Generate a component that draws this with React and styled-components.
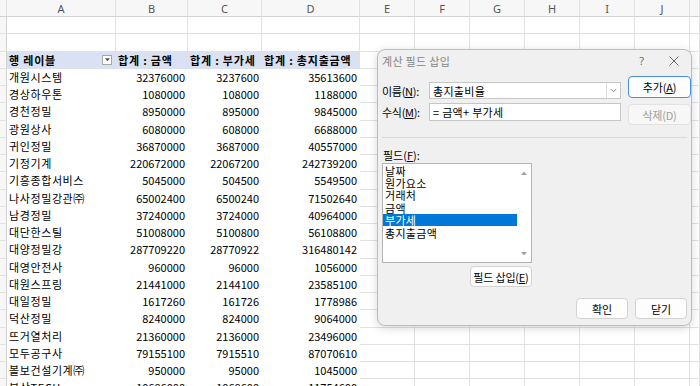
import React from 'react';
import styled, { createGlobalStyle } from 'styled-components';

const GlobalStyle = createGlobalStyle`
  html, body { margin: 0; padding: 0; background: #fff; }
  body {
    width: 700px; height: 386px; overflow: hidden;
    font-family: "Noto Sans CJK KR", "Noto Sans", sans-serif;
  }
`;

const COLS = '7px 109px 72px 74px 98px 55px 55px 55px 55px 55px 55px 1fr';
const LETTERS = ['A', 'B', 'C', 'D', 'E', 'F', 'G', 'H', 'I', 'J', ''];
const EXTRA = 7; // columns E..K

const DATA = [
  ['개원시스템', '32376000', '3237600', '35613600'],
  ['경상하우톤', '1080000', '108000', '1188000'],
  ['경천정밀', '8950000', '895000', '9845000'],
  ['광원상사', '6080000', '608000', '6688000'],
  ['귀인정밀', '36870000', '3687000', '40557000'],
  ['기정기계', '220672000', '22067200', '242739200'],
  ['기흥종합서비스', '5045000', '504500', '5549500'],
  ['나사정밀강관㈜', '65002400', '6500240', '71502640'],
  ['남경정밀', '37240000', '3724000', '40964000'],
  ['대단한스틸', '51008000', '5100800', '56108800'],
  ['대양정밀강', '287709220', '28770922', '316480142'],
  ['대영안전사', '960000', '96000', '1056000'],
  ['대원스프링', '21441000', '2144100', '23585100'],
  ['대일정밀', '1617260', '161726', '1778986'],
  ['덕산정밀', '8240000', '824000', '9064000'],
  ['뜨거열처리', '21360000', '2136000', '23496000'],
  ['모두공구사', '79155100', '7915510', '87070610'],
  ['볼보건설기계㈜', '950000', '95000', '1045000'],
  ['부산TECH', '10686000', '1068600', '11754600'],
];

const FIELDS = ['날짜', '원가요소', '거래처', '금액', '부가세', '총지출금액'];

const Page = styled.div`
  position: relative;
  width: 700px;
  height: 386px;
  overflow: hidden;
`;

const Sheet = styled.div`
  display: grid;
  grid-template-columns: ${COLS};
  grid-template-rows: 17px;
  grid-auto-rows: 17.25px;
  font-family: "Noto Sans CJK KR", sans-serif;
  font-size: 11px;
  color: #000;
`;

const ColHead = styled.div`
  box-sizing: border-box;
  background: #f7f7f7;
  border-right: 1px solid #e2e2e2;
  border-bottom: 1px solid #d2d2d2;
  display: flex;
  align-items: center;
  justify-content: center;
  color: #555;
  font-family: "Noto Sans", sans-serif;
  font-size: 11px;
`;

const RowHead = styled.div`
  box-sizing: border-box;
  background: #f7f7f7;
  border-right: 1px solid #d2d2d2;
  border-bottom: 1px solid #e2e2e2;
`;

const Cell = styled.div`
  box-sizing: border-box;
  display: flex;
  align-items: center;
  min-width: 0;
  white-space: nowrap;
  overflow: hidden;
  justify-content: ${p => (p.$num ? 'flex-end' : 'space-between')};
  padding: ${p => (p.$num ? '0 2px 0 0' : '0 0 0 2px')};
  border-right: 1px solid ${p => (p.$pivot ? 'transparent' : '#e2e2e2')};
  border-bottom: 1px solid ${p => (p.$pivot ? 'transparent' : '#e2e2e2')};
  background: ${p => (p.$head ? '#d9e1f2' : '#fff')};
  font-weight: ${p => (p.$head ? 700 : 400)};
  letter-spacing: ${p => (p.$head ? '0.8px' : p.$label ? '0.6px' : '0')};
`;

const FilterButton = styled.span`
  box-sizing: border-box;
  width: 10px;
  height: 10px;
  margin-right: 3px;
  background: #fff;
  border: 1px solid #a6a6a6;
  display: flex;
  align-items: center;
  justify-content: center;
`;

/* ---------- dialog ---------- */

const Dialog = styled.div`
  position: absolute;
  left: 377px;
  top: 49px;
  width: 315px;
  height: 277px;
  box-sizing: border-box;
  background: #f0f0f0;
  border: 1px solid #bdbdbd;
  border-radius: 8px;
  box-shadow: 0 2px 10px rgba(0, 0, 0, 0.16);
  display: flex;
  flex-direction: column;
  font-family: "Noto Sans CJK KR", sans-serif;
  font-size: 11px;
  color: #000;
`;

const TitleBar = styled.div`
  height: 21px;
  display: flex;
  align-items: center;
  padding: 0 12px 0 4px;
  color: #858585;
`;

const Title = styled.span`
  flex: 1;
  letter-spacing: 0.3px;
`;

const TitleIcons = styled.div`
  display: flex;
  align-items: center;
  gap: 25px;
  color: #6b6b6b;
  font-family: "Noto Sans", sans-serif;
  font-size: 11px;
`;

const Body = styled.div`
  padding: 5px 4px 0 4px;
  display: flex;
  flex-direction: column;
`;

const TopGrid = styled.div`
  display: grid;
  grid-template-columns: 40px 192px 63px;
  grid-template-rows: 23px 22px;
  column-gap: 7px;
  row-gap: 4px;
`;

const Label = styled.div`
  align-self: ${p => (p.$row === 1 ? 'end' : 'start')};
  height: ${p => (p.$row === 1 ? '17px' : '18px')};
  display: flex;
  align-items: center;
  white-space: nowrap;
  letter-spacing: -0.3px;
`;

const Field = styled.div`
  box-sizing: border-box;
  align-self: ${p => (p.$row === 1 ? 'end' : 'start')};
  height: ${p => (p.$row === 1 ? '17px' : '18px')};
  background: #fff;
  border: 1px solid #c6c6c6;
  display: flex;
  align-items: center;
`;

const FieldText = styled.span`
  flex: 1;
  padding-left: 3px;
  letter-spacing: 0.3px;
`;

const DropButton = styled.span`
  box-sizing: border-box;
  width: 14px;
  height: 100%;
  border-left: 1px solid #dcdcdc;
  display: flex;
  align-items: center;
  justify-content: center;
`;

const Button = styled.button`
  box-sizing: border-box;
  height: ${p => p.$h || 21}px;
  width: ${p => (p.$w ? `${p.$w}px` : 'auto')};
  margin-top: ${p => p.$mt || 0}px;
  align-self: start;
  padding: 0;
  background: ${p => (p.$disabled ? '#f7f7f7' : '#fdfdfd')};
  border: 1px solid ${p => (p.$default ? '#4a8fd8' : p.$disabled ? '#e2e2e2' : '#d3d3d3')};
  border-radius: 4px;
  color: ${p => (p.$disabled ? '#9d9d9d' : '#000')};
  font-family: "Noto Sans CJK KR", sans-serif;
  font-size: 11px;
  display: flex;
  align-items: center;
  justify-content: center;
  letter-spacing: -0.2px;
`;

const Separator = styled.div`
  margin-top: 12px;
  height: 1px;
  background: #dadada;
`;

const FieldLabel = styled.div`
  margin-top: 10px;
  height: 14px;
  display: flex;
  align-items: center;
  padding-left: 1px;
`;

const ListArea = styled.div`
  width: 150px;
  display: flex;
  flex-direction: column;
  margin-top: 1px;
`;

const ListBox = styled.div`
  box-sizing: border-box;
  width: 150px;
  height: 100px;
  background: #fff;
  border: 1px solid #b4b4b4;
  display: flex;
`;

const Items = styled.div`
  width: 134px;
  display: flex;
  flex-direction: column;
  padding-top: 0.5px;
`;

const Item = styled.div`
  height: 12.4px;
  line-height: 12px;
  display: flex;
  align-items: center;
  overflow: hidden;
  padding-left: 2px;
  letter-spacing: 0.3px;
  background: ${p => (p.$selected ? '#0078d7' : 'transparent')};
  color: ${p => (p.$selected ? '#fff' : '#000')};
`;

const ScrollBar = styled.div`
  flex: 1;
  display: flex;
  flex-direction: column;
  align-items: center;
  justify-content: space-between;
  padding: 7px 0 6px;
`;

const InsertRow = styled.div`
  display: flex;
  justify-content: flex-end;
  margin-top: 3px;
`;

const Footer = styled.div`
  display: flex;
  justify-content: flex-end;
  gap: 7px;
  margin-top: 11px;
`;

const Chevron = () => (
  <svg width="7" height="5" viewBox="0 0 7 5">
    <path d="M0.8 1 L3.5 3.8 L6.2 1" fill="none" stroke="#7a7a7a" strokeWidth="0.9" />
  </svg>
);

const Tri = ({ up, color = '#a3a3a3', w = 6 }) => (
  <svg width={w} height="4" viewBox="0 0 6 4">
    <path d={up ? 'M0 4 L3 0.5 L6 4 Z' : 'M0 0 L3 3.5 L6 0 Z'} fill={color} />
  </svg>
);

const CloseIcon = () => (
  <svg width="10" height="10" viewBox="0 0 10 10">
    <path d="M0.5 0.5 L9.5 9.5 M9.5 0.5 L0.5 9.5" stroke="#6b6b6b" strokeWidth="1" />
  </svg>
);

export default function App() {
  const rows = [];
  [1, 2].forEach(r => {
    rows.push(<RowHead key={`rh${r}`} />);
    for (let c = 0; c < 11; c++) rows.push(<Cell key={`e${r}-${c}`} />);
  });
  rows.push(<RowHead key="rh3" />);
  rows.push(
    <Cell key="h0" $pivot $head>
      <span>행 레이블</span>
      <FilterButton><Tri w={5} color="#555" /></FilterButton>
    </Cell>
  );
  rows.push(<Cell key="h1" $pivot $head>합계 : 금액</Cell>);
  rows.push(<Cell key="h2" $pivot $head>합계 : 부가세</Cell>);
  rows.push(<Cell key="h3" $pivot $head>합계 : 총지출금액</Cell>);
  for (let i = 0; i < EXTRA; i++) rows.push(<Cell key={`hx${i}`} />);
  DATA.forEach((d, i) => {
    const r = i + 4;
    rows.push(<RowHead key={`rh${r}`} />);
    rows.push(<Cell key={`d${r}a`} $pivot $label>{d[0]}</Cell>);
    rows.push(<Cell key={`d${r}b`} $pivot $num>{d[1]}</Cell>);
    rows.push(<Cell key={`d${r}c`} $pivot $num>{d[2]}</Cell>);
    rows.push(<Cell key={`d${r}d`} $pivot $num>{d[3]}</Cell>);
    for (let c = 0; c < EXTRA; c++) rows.push(<Cell key={`d${r}x${c}`} />);
  });

  return (
    <>
      <GlobalStyle />
      <Page>
        <Sheet>
          <ColHead />
          {LETTERS.map((l, i) => <ColHead key={`c${i}`}>{l}</ColHead>)}
          {rows}
        </Sheet>

        <Dialog>
          <TitleBar>
            <Title>계산 필드 삽입</Title>
            <TitleIcons>
              <span>?</span>
              <CloseIcon />
            </TitleIcons>
          </TitleBar>
          <Body>
            <TopGrid>
              <Label $row={1}>이름(<u>N</u>):</Label>
              <Field $row={1}>
                <FieldText>총지출비율</FieldText>
                <DropButton><Chevron /></DropButton>
              </Field>
              <Button $default $h={22}>추가(<u>A</u>)</Button>
              <Label $row={2}>수식(<u>M</u>):</Label>
              <Field $row={2}>
                <FieldText>= 금액+ 부가세</FieldText>
              </Field>
              <Button $disabled $mt={1}>삭제(D)</Button>
            </TopGrid>
            <Separator />
            <FieldLabel>필드(<u>F</u>):</FieldLabel>
            <ListArea>
              <ListBox>
                <Items>
                  {FIELDS.map(f => (
                    <Item key={f} $selected={f === '부가세'}>{f}</Item>
                  ))}
                </Items>
                <ScrollBar>
                  <Tri up />
                  <Tri />
                </ScrollBar>
              </ListBox>
              <InsertRow>
                <Button $w={62}>필드 삽입(<u>E</u>)</Button>
              </InsertRow>
            </ListArea>
            <Footer>
              <Button $w={52}>확인</Button>
              <Button $w={52}>닫기</Button>
            </Footer>
          </Body>
        </Dialog>
      </Page>
    </>
  );
}
